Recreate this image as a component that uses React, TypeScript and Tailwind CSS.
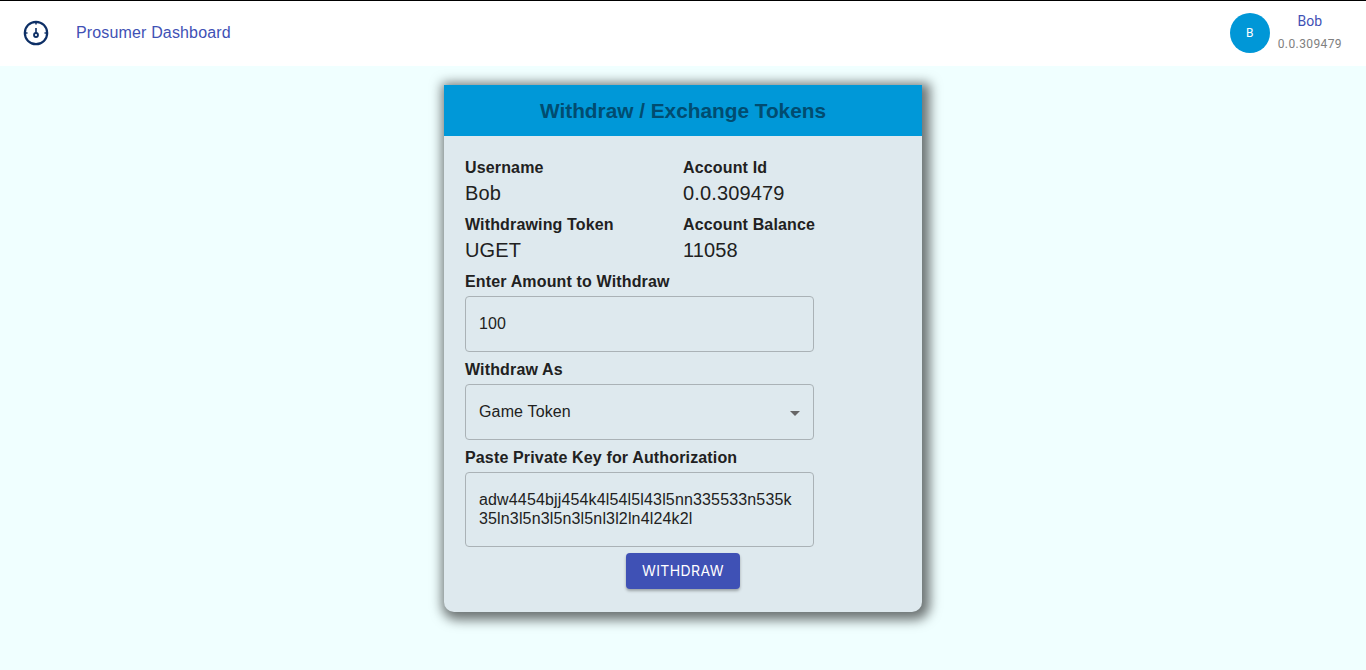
import React from "react";

const lib = "font-['Liberation_Sans',Arial,sans-serif]";

function Info({ label, value }: { label: string; value: string }) {
  return (
    <div className="w-[218px] h-[57px]">
      <div className="text-base font-bold leading-[24px] pt-[1px] h-[25px] tracking-[0.15px] text-[#212121]">{label}</div>
      <div className="text-[20px] leading-[26px] tracking-[0.15px] text-[#212121]">{value}</div>
    </div>
  );
}

export default function App() {
  return (
    <div className={`${lib} w-[1366px] h-[670px] overflow-hidden bg-[#f0ffff] flex flex-col`}>
      <header className="h-[66px] bg-white border-t border-black flex items-center shrink-0">
        <svg className="ml-[23px] -mt-[2px] w-[26px] h-[26px]" viewBox="0 0 26 26" fill="none" stroke="#0d2f66" strokeWidth="2.2">
          <circle cx="13" cy="13" r="11.2" />
          <circle cx="13" cy="15" r="2" strokeWidth="1.8" />
          <path d="M13 13V8M13 2v2.5M2 13h2.5M21.5 13h2.5" strokeWidth="1.6" />
        </svg>
        <div className="ml-[27px] -mt-[2px] text-base tracking-[0.15px] text-[#3f51b5]">Prosumer Dashboard</div>
        <div className="ml-auto mr-[24px] -mt-[2px] flex items-center">
          <div className="w-10 h-10 rounded-full bg-[#0097d7] text-white flex items-center justify-center text-xs font-['Roboto',sans-serif]">B</div>
          <div className="ml-2 flex flex-col items-center font-['Roboto',sans-serif]">
            <div className="text-sm leading-[20px] text-[#3f51b5]">Bob</div>
            <div className="text-xs leading-[20px] mt-[3px] text-[#808080] tracking-[0.4px]">0.0.309479</div>
          </div>
        </div>
      </header>
      <main className="flex justify-center pt-[19px]">
        <div className="w-[478px] h-[527px] rounded-b-[10px] bg-[#dee9ee] shadow-[3px_3px_12px_5px_rgba(0,0,0,0.55)] overflow-hidden">
          <div className="h-[51px] bg-[#0098d8] flex items-center justify-center text-[20.8px] font-bold text-[#014c70]">
            Withdraw / Exchange Tokens
          </div>
          <div className="pl-[21px] pt-[19px] text-[#212121] tracking-[0.15px]">
            <div className="flex">
              <Info label="Username" value="Bob" />
              <Info label="Account Id" value="0.0.309479" />
            </div>
            <div className="flex">
              <Info label="Withdrawing Token" value="UGET" />
              <Info label="Account Balance" value="11058" />
            </div>
            <div className="text-base font-bold leading-[24px] h-[27px] pt-[1px]">Enter Amount to Withdraw</div>
            <div className="w-[349px] h-[56px] border border-[#aab2b6] rounded flex items-center px-[13px] text-base">100</div>
            <div className="text-base font-bold leading-[24px] h-[32px] pt-[6px]">Withdraw As</div>
            <div className="w-[349px] h-[56px] border border-[#aab2b6] rounded flex items-center justify-between pl-[13px] pr-[13px] text-base">
              <span>Game Token</span>
              <svg width="10" height="5" viewBox="0 0 10 5" className="mt-[2px]"><path d="M0 0h10L5 5z" fill="#666" /></svg>
            </div>
            <div className="text-base font-bold leading-[24px] h-[32px] pt-[6px]">Paste Private Key for Authorization</div>
            <div className="w-[349px] h-[75px] border border-[#aab2b6] rounded px-[13px] pt-[17px] text-base leading-[19px] break-all">
              adw4454bjj454k4l54l5l43l5nn335533n535k35ln3l5n3l5n3l5nl3l2ln4l24k2l
            </div>
            <div className="w-[436px] flex justify-center mt-[6px]">
              <button className="w-[114px] h-[36px] rounded bg-[#3f51b5] text-white text-sm tracking-[0.4px] font-['Inter',sans-serif] shadow-[0_2px_3px_rgba(0,0,0,0.3)] whitespace-nowrap">
                WITHDRAW
              </button>
            </div>
          </div>
        </div>
      </main>
    </div>
  );
}
